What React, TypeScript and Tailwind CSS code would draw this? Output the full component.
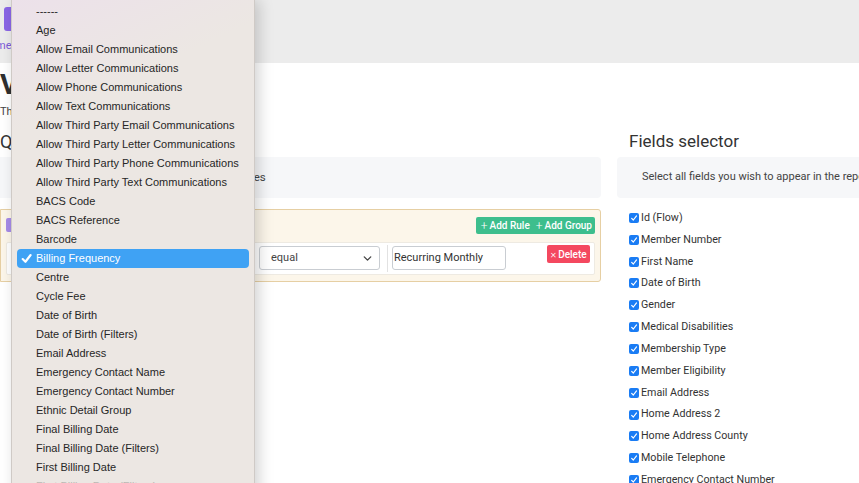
import { ChevronDown } from 'lucide-react';

const OPTIONS = [
  '------',
  'Age',
  'Allow Email Communications',
  'Allow Letter Communications',
  'Allow Phone Communications',
  'Allow Text Communications',
  'Allow Third Party Email Communications',
  'Allow Third Party Letter Communications',
  'Allow Third Party Phone Communications',
  'Allow Third Party Text Communications',
  'BACS Code',
  'BACS Reference',
  'Barcode',
  'Billing Frequency',
  'Centre',
  'Cycle Fee',
  'Date of Birth',
  'Date of Birth (Filters)',
  'Email Address',
  'Emergency Contact Name',
  'Emergency Contact Number',
  'Ethnic Detail Group',
  'Final Billing Date',
  'Final Billing Date (Filters)',
  'First Billing Date',
  'First Billing Date (Filters)',
];

const FIELDS = [
  'Id (Flow)',
  'Member Number',
  'First Name',
  'Date of Birth',
  'Gender',
  'Medical Disabilities',
  'Membership Type',
  'Member Eligibility',
  'Email Address',
  'Home Address 2',
  'Home Address County',
  'Mobile Telephone',
  'Emergency Contact Number',
];

function Check({ className, width = 1.8 }: { className?: string; width?: number }) {
  return (
    <svg viewBox="0 0 12 12" className={className} fill="none" stroke="currentColor" strokeWidth={width} strokeLinecap="round" strokeLinejoin="round">
      <path d="M2.5 6.5 L5 9 L9.8 2.8" />
    </svg>
  );
}

function Checkbox() {
  return (
    <span className="w-[10px] h-[10px] rounded-[2px] bg-[#1a7cf4] flex items-center justify-center text-white shrink-0">
      <Check className="w-[8px] h-[8px]" />
    </span>
  );
}

function SelectMenu() {
  return (
    <div className="absolute left-[11px] top-0 w-[244px] h-[500px] bg-[linear-gradient(155deg,#ece1ea_0%,#ece7e3_22%)] border-l border-r border-[#cfcac6] shadow-[4px_0_14px_rgba(0,0,0,0.18)] pt-[1.5px] font-['Liberation_Sans',sans-serif] text-[11px] text-[#262626]">
      {OPTIONS.map((o, i) => {
        const active = o === 'Billing Frequency';
        const faded = i === OPTIONS.length - 1;
        return (
          <div
            key={o + i}
            className={`h-[19px] mx-[5px] rounded-[4px] flex items-center pl-[19px] whitespace-nowrap relative ${active ? 'bg-[#3fa2f4] text-white' : ''} ${faded ? 'text-[#bcb8b4]' : ''}`}
          >
            {active && <Check className="absolute left-[3px] top-[3px] w-[13px] h-[13px]" width={2} />}
            {o}
          </div>
        );
      })}
    </div>
  );
}

export default function App() {
  return (
    <div className="relative w-[859px] h-[483px] overflow-hidden bg-white font-['Roboto',sans-serif] text-[#333]">
      {/* top bar */}
      <div className="h-[63px] bg-[#ececec] pt-[7px] pl-[4px]">
        <div className="w-[80px] h-[24px] rounded-[3px] bg-[#8a66e6]" />
        <div className="-ml-[22px] mt-[8px] text-[11px] leading-[14px] text-[#7b5ad8] whitespace-nowrap">Home</div>
      </div>

      <div className="pt-[5px]">
        <h1 className="text-[28px] leading-[34px] font-bold text-[#2f2f2f] whitespace-nowrap">Views</h1>
        <p className="text-[11px] leading-[20px] text-[#444] whitespace-nowrap">This is the report builder</p>

        <div className="flex gap-[16px]">
          {/* query builder */}
          <div className="w-[601px] shrink-0">
            <h2 className="mt-[8px] mb-[3px] text-[18px] leading-[24px] text-[#333] whitespace-nowrap">Query</h2>
            <div className="h-[41px] bg-[#f6f7f9] rounded-r-[4px] flex items-center pl-[15px] text-[11.5px] text-[#444] whitespace-nowrap">
              Add rules and groups to filter the report by values
            </div>

            <div className="mt-[11px] h-[73px] bg-[#fcf6ea] border border-[#e6cfa3] rounded-r-[3px] pt-[7px] pr-[5px] pl-[5px]">
              <div className="flex items-start justify-between">
                <div className="mt-[1px] w-[60px] h-[14px] rounded-[2px] bg-[#a68be8]" />
                <div className="flex h-[17px] bg-[#3dbe8d] rounded-[2px] text-white text-[10px] font-medium">
                  <span className="flex items-center gap-[2px] pl-[5px] pr-[4px]"><span className="text-[12px] font-light leading-none">+</span>Add Rule</span>
                  <span className="flex items-center gap-[2px] pl-[2px] pr-[3px]"><span className="text-[12px] font-light leading-none">+</span>Add Group</span>
                </div>
              </div>

              <div className="mt-[8px] h-[33px] bg-white border border-[#eeeae2] rounded-[2px] flex items-start pt-[2px] pl-[6px] pr-[4px]">
                <div className="mt-[1px] w-[240px] h-[24px] border border-[#c9cdd2] rounded-[3px] bg-white" />
                <div className="mt-[1px] ml-[6px] w-[121px] h-[24px] border border-[#c9cdd2] rounded-[3px] bg-white flex items-center justify-between pl-[11px] pr-[5px] text-[11px] text-[#444]">
                  equal
                  <ChevronDown className="w-[13px] h-[13px] text-[#444]" strokeWidth={2.5} />
                </div>
                <div className="ml-[7px] w-px h-[27px] bg-[#e2e2e2]" />
                <div className="mt-[1px] ml-[4px] w-[114px] h-[24px] border border-[#c9cdd2] rounded-[3px] bg-white flex items-center pl-[1px] text-[11px] text-[#333] whitespace-nowrap">
                  Recurring Monthly
                </div>
                <div className="flex-1" />
                <div className="w-[43px] h-[18px] bg-[#f4485f] rounded-[2px] text-white text-[10px] font-medium flex items-center justify-center gap-[2px]">
                  <span className="text-[11px] font-light leading-none">×</span>Delete
                </div>
              </div>
            </div>
          </div>

          {/* fields selector */}
          <div className="w-[260px] shrink-0">
            <h2 className="mt-[7px] pl-[12px] text-[17px] leading-[24px] text-[#333] whitespace-nowrap">Fields selector</h2>
            <div className="mt-[4px] h-[41px] bg-[#f6f7f9] rounded-l-[4px] flex items-center pl-[25px] text-[11px] text-[#444] whitespace-nowrap">
              Select all fields you wish to appear in the report
            </div>
            <div className="mt-[9px] pl-[12px]">
              {FIELDS.map(f => (
                <div key={f} className="h-[21.85px] flex items-center gap-[2px] text-[10.7px] text-[#333] whitespace-nowrap">
                  <Checkbox />
                  {f}
                </div>
              ))}
            </div>
          </div>
        </div>
      </div>

      <SelectMenu />
    </div>
  );
}
